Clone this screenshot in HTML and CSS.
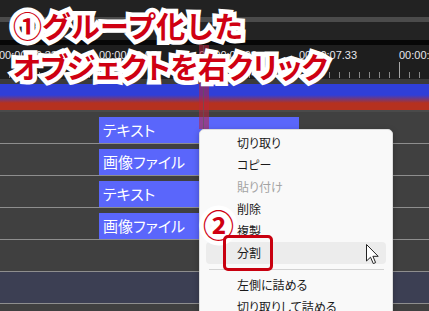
FILE: index.html
```html
<!DOCTYPE html>
<html lang="ja">
<head>
<meta charset="utf-8">
<link rel="stylesheet" href="styles.css">
</head>
<body>
<div class="app">
  <div class="topbar"></div>
  <div class="hscroll"></div>
  <div class="toolbar"></div>
  <div class="blackline"></div>
  <div class="ruler">
    <div class="labels">
      <span>00:00:06.33</span>
      <span>00:00:06.67</span>
      <span>00:00:07.00</span>
      <span>00:00:07.33</span>
      <span>00:00:07.67</span>
    </div>
    <div class="ticks"></div>
  </div>
  <div class="ruler-edge"></div>
  <div class="track-band"></div>
  <div class="band-edge"></div>
  <div class="rows">
    <div class="row"><div class="clip">テキスト</div></div>
    <div class="row"><div class="clip">画像ファイル</div></div>
    <div class="row"><div class="clip">テキスト</div></div>
    <div class="row"><div class="clip">画像ファイル</div></div>
    <div class="row"></div>
    <div class="row row-sel"></div>
    <div class="row"></div>
  </div>

  <div class="playhead"><div class="playhead-line"></div></div>

  <div class="menu">
    <div class="item">切り取り</div>
    <div class="item">コピー</div>
    <div class="item disabled">貼り付け</div>
    <div class="item">削除</div>
    <div class="item">複製</div>
    <div class="item hover">分割</div>
    <div class="sep"></div>
    <div class="item">左側に詰める</div>
    <div class="item">切り取りして詰める</div>
  </div>

  <div class="note note1"><div>①グループ化した</div><div class="l2">オブジェクトを右クリック</div></div>
  <div class="note note2">②</div>
  <div class="mark"></div>

  <svg class="cursor" width="14" height="22" viewBox="0 0 14 22">
    <path d="M0.5 0.5 L0.5 17 L4.5 13.2 L7.3 19.6 L9.6 18.6 L6.9 12.3 L12.2 12.3 Z" fill="#fff" stroke="#222" stroke-width="1" stroke-linejoin="miter"/>
  </svg>
</div>
</body>
</html>
```

FILE: styles.css
```css
html, body {
  margin: 0;
  padding: 0;
  background: #404040;
  overflow: hidden;
}

.app {
  position: relative;
  width: 429px;
  height: 311px;
  overflow: hidden;
  font-family: "Noto Sans CJK JP", "Noto Sans", sans-serif;
}

.topbar { height: 17px; background: #222222; }
.hscroll { height: 5px; background: #4b4b4b; }
.toolbar { height: 18px; background: #232323; }
.blackline { height: 5px; background: #070707; }

.ruler {
  height: 34px;
  background: #1e1e1e;
  display: flex;
  flex-direction: column;
  justify-content: space-between;
}

.labels {
  display: flex;
  margin-left: -1px;
  padding-top: 4px;
  font-family: "Liberation Sans", Arial, sans-serif;
  font-size: 11px;
  line-height: 13px;
  color: #e6e6ec;
  white-space: nowrap;
}

.labels span {
  flex: 0 0 100px;
  width: 100px;
}

.ticks {
  height: 16px;
  margin-bottom: 1px;
  background:
    repeating-linear-gradient(to right, transparent 0 99px, #a8a8a8 99px 100px) left bottom / 100% 16px no-repeat,
    repeating-linear-gradient(to right, transparent 0 9px, #8a8a8a 9px 10px) left bottom / 100% 6px no-repeat;
}

.ruler-edge { height: 5px; background: #3b3b3b; }

.track-band {
  height: 26px;
  background: linear-gradient(to bottom, #2f3fd8 0, #2f3fd8 11px, #b5311f 19px, #b5311f 100%);
}

.band-edge { height: 2px; background: #4a4a4a; }

.rows { display: flex; flex-direction: column; }

.row {
  height: 31px;
  border-bottom: 1px solid #8e8e8e;
  background: #404040;
  display: flex;
  align-items: flex-end;
}

.row-sel { background: #3c3f53; }

.clip {
  margin-left: 99px;
  width: 200px;
  height: 26px;
  box-sizing: border-box;
  padding-left: 4px;
  background: #5a66fb;
  color: #ffffff;
  font-size: 15px;
  line-height: 26px;
  font-feature-settings: "palt";
  white-space: nowrap;
}

.playhead {
  position: absolute;
  left: 199px;
  top: 45px;
  width: 10px;
  height: 84px;
  background: rgba(190, 35, 60, 0.55);
}

.playhead-line {
  margin-left: 4px;
  width: 1px;
  height: 100%;
  background: rgba(90, 90, 90, 0.6);
}

.menu {
  position: absolute;
  left: 199px;
  top: 129px;
  width: 194px;
  height: 200px;
  box-sizing: border-box;
  padding: 2px 6px;
  background: #f9f9f9;
  border: 1px solid #dcdcdc;
  border-radius: 5px;
  box-shadow: 0 2px 6px rgba(0, 0, 0, 0.25);
}

.item {
  height: 22px;
  line-height: 22px;
  padding-left: 31px;
  font-size: 12px;
  font-feature-settings: "palt";
  color: #1a1a1a;
  border-radius: 4px;
  white-space: nowrap;
}

.item.disabled { color: #a3a3a3; }
.item.hover { background: #ececec; }

.sep {
  height: 1px;
  margin: 5px 2px 4px 3px;
  background: #d2d2d2;
}

.note {
  position: absolute;
  font-weight: 700;
  font-size: 29px;
  line-height: 41px;
  color: #cf0012;
  -webkit-text-stroke: 9px #ffffff;
  paint-order: stroke fill;
  white-space: nowrap;
}

.note1 { left: 13px; top: 5px; }
.note1 .l2 { font-feature-settings: "palt"; letter-spacing: -0.2px; }

.note2 { left: 203px; top: 203px; font-size: 31px; }

.mark {
  position: absolute;
  left: 223px;
  top: 235px;
  width: 50px;
  height: 36px;
  box-sizing: border-box;
  border: 3px solid #c8000f;
  border-radius: 5px;
}

.cursor {
  position: absolute;
  left: 366px;
  top: 244px;
}
```
